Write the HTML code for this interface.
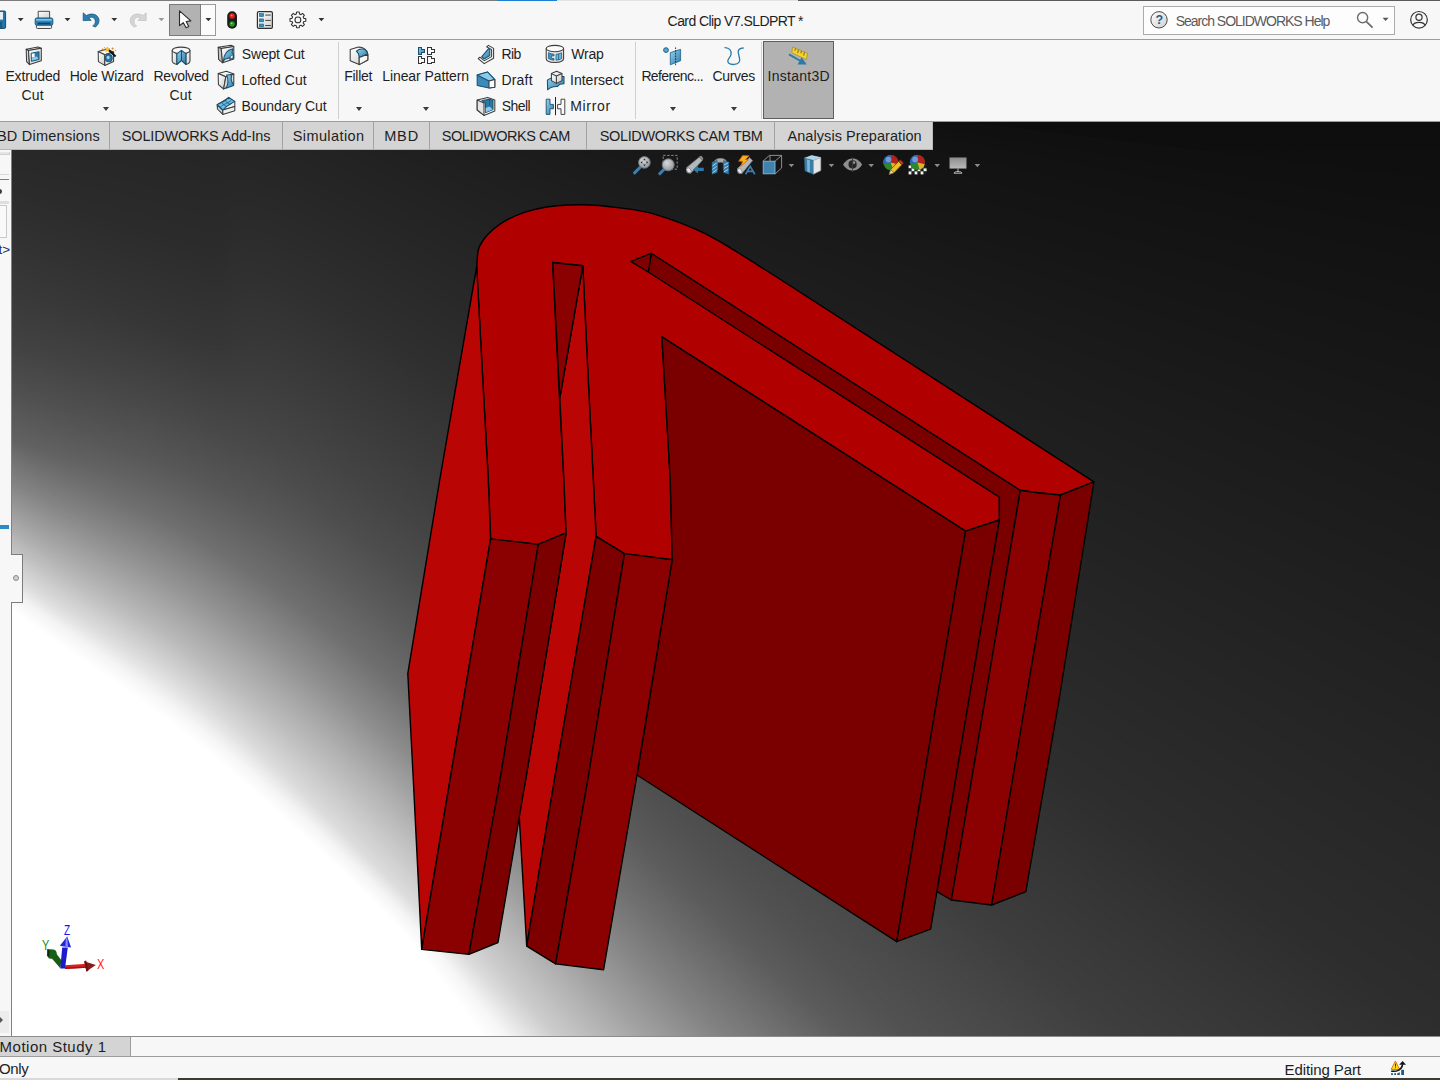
<!DOCTYPE html>
<html lang="en">
<head>
<meta charset="utf-8">
<title>Card Clip V7.SLDPRT * - SOLIDWORKS</title>
<style>

html,body{margin:0;padding:0;background:#f7f7f7;}
body{width:1440px;height:1080px;overflow:hidden;font-family:"Liberation Sans",sans-serif;}
#app{position:relative;width:1440px;height:1080px;overflow:hidden;background:#f7f7f7;}
.abs{position:absolute;}
.t{position:absolute;white-space:nowrap;font-family:"Liberation Sans",sans-serif;}
.ln{position:absolute;}
svg{position:absolute;overflow:visible;}

</style>
</head>
<body>
<div id="app">
<div id="viewport" class="abs" style="left:12px;top:122px;width:1428px;height:914px;background:linear-gradient(42.2deg,#fff 0%,#ffffff 19.65%,#cdcdcd 22.58%,#a2a2a2 26.25%,#828282 29.43%,#5c5c5c 34.44%,#464646 38.90%,#3c3c3c 46.29%,#383838 49.59%,#2c2c2c 58.75%,#101010 98.53%);"></div>
<svg id="scene-bg" style="left:12px;top:122px;overflow:hidden" width="1428" height="914" viewBox="12 122 1428 914">
<rect x="12" y="122" width="1428" height="914" fill="#0e0e0e"/>
<path fill="#0f0f0f" d="M-1180,140L1320,150C1340,150 1420,150 1440,150L3940,161L1440,2661L-3680,2640Z"/>
<path fill="#101010" d="M-1282,-150L1200,150C1240,155 1400,174 1440,179L3922,479L1422,2979L-3782,2350Z"/>
<path fill="#111111" d="M-1389,-244L1080,150C1140,160 1380,198 1440,208L3909,602L1409,3102L-3889,2256Z"/>
<path fill="#121212" d="M-1444,-338L1008,150C1080,164 1368,222 1440,236L3892,724L1392,3224L-3944,2162Z"/>
<path fill="#131313" d="M-1502,-404L936,150C1020,169 1356,245 1440,264L3878,818L1378,3318L-4002,2096Z"/>
<path fill="#141414" d="M-1562,-452L864,150C960,174 1344,269 1440,293L3866,895L1366,3395L-4062,2048Z"/>
<path fill="#151515" d="M-1625,-490L792,150C900,179 1332,293 1440,322L3857,961L1357,3461L-4125,2010Z"/>
<path fill="#161616" d="M-1689,-519L720,150C840,183 1320,317 1440,350L3849,1019L1349,3519L-4189,1981Z"/>
<path fill="#171717" d="M-1701,-579L690,150C815,188 1315,341 1440,379L3831,1108L1331,3608L-4201,1921Z"/>
<path fill="#181818" d="M-1714,-634L660,150C790,193 1310,365 1440,408L3814,1191L1314,3691L-4214,1866Z"/>
<path fill="#191919" d="M-1727,-683L630,150C765,198 1305,389 1440,436L3797,1269L1297,3769L-4227,1817Z"/>
<path fill="#1a1a1a" d="M-1741,-728L600,150C740,202 1300,412 1440,465L3781,1343L1281,3843L-4241,1772Z"/>
<path fill="#1b1b1b" d="M-1755,-769L570,150C715,207 1295,436 1440,494L3765,1412L1265,3912L-4255,1731Z"/>
<path fill="#1c1c1c" d="M-1770,-806L540,150C690,212 1290,460 1440,522L3750,1479L1250,3979L-4270,1694Z"/>
<path fill="#1d1d1d" d="M-1785,-840L510,150C665,217 1285,484 1440,551L3735,1542L1235,4042L-4285,1660Z"/>
<path fill="#1e1e1e" d="M-1802,-872L480,150C640,222 1280,508 1440,580L3722,1602L1222,4102L-4302,1628Z"/>
<path fill="#1f1f1f" d="M-1819,-899L450,150C615,226 1275,531 1440,608L3709,1656L1209,4156L-4319,1601Z"/>
<path fill="#202020" d="M-1838,-924L420,150C590,231 1270,554 1440,635L3698,1709L1198,4209L-4338,1576Z"/>
<path fill="#212121" d="M-1857,-947L390,150C565,235 1265,577 1440,662L3687,1759L1187,4259L-4357,1553Z"/>
<path fill="#222222" d="M-2000,-699L352,150C358,152 209,74 390,164C571,254 1265,602 1440,690L3675,1810L1175,4310L-4500,1801Z"/>
<path fill="#232323" d="M-2038,-699L314,150C327,155 202,83 390,177C578,272 1265,627 1440,718L3663,1861L1163,4361L-4538,1801Z"/>
<path fill="#242424" d="M-2076,-699L276,150C295,157 196,92 390,191C584,290 1265,653 1440,745L3651,1911L1151,4411L-4576,1801Z"/>
<path fill="#252525" d="M-2114,-699L238,150C263,159 190,101 390,205C590,309 1265,678 1440,772L3639,1961L1139,4461L-4614,1801Z"/>
<path fill="#262626" d="M-2152,-699L200,150C232,161 183,110 390,219C597,327 1265,703 1440,800L3627,2011L1127,4511L-4652,1801Z"/>
<path fill="#272727" d="M-2327,-352L122,150C135,153 155,152 200,166C245,180 183,122 390,232C597,343 1265,729 1440,829L3614,2064L1114,4564L-4827,2148Z"/>
<path fill="#282828" d="M-2405,-352L44,150C70,155 142,166 200,182C258,198 183,133 390,246C597,359 1265,756 1440,858L3600,2116L1100,4616L-4905,2148Z"/>
<path fill="#292929" d="M-2394,-392L44,162C70,168 142,182 200,198C258,214 183,143 390,258C597,373 1265,782 1440,886L3585,2170L1085,4670L-4894,2108Z"/>
<path fill="#2a2a2a" d="M-2381,-431L44,175C70,182 142,198 200,214C258,230 183,153 390,270C597,387 1265,808 1440,915L3570,2224L1070,4724L-4881,2069Z"/>
<path fill="#2b2b2b" d="M-2368,-470L44,188C70,195 142,214 200,230C258,246 183,163 390,282C597,401 1265,833 1440,944L3555,2277L1055,4777L-4868,2030Z"/>
<path fill="#2c2c2c" d="M-2354,-507L44,200C70,208 142,230 200,246C258,262 183,173 390,294C597,415 1265,859 1440,972L3540,2329L1040,4829L-4854,1993Z"/>
<path fill="#2d2d2d" d="M-2351,-508L44,208C70,216 142,239 200,255C258,271 183,182 390,306C597,430 1265,885 1440,1001L3524,2381L1024,4881L-4851,1992Z"/>
<path fill="#2e2e2e" d="M-2348,-509L44,217C70,225 142,247 200,264C258,281 183,190 390,318C597,446 1265,911 1440,1030L3509,2433L1009,4933L-4848,1991Z"/>
<path fill="#2f2f2f" d="M-2345,-510L44,225C70,233 142,256 200,273C258,290 187,204 390,330C593,456 1248,913 1420,1030L3488,2435L988,4935L-4845,1990Z"/>
<path fill="#303030" d="M-2343,-511L44,233C70,241 142,264 200,282C258,300 190,217 390,342C590,467 1232,915 1400,1030L3467,2437L967,4937L-4843,1989Z"/>
<path fill="#313131" d="M-2340,-512L44,242C70,250 142,273 200,291C258,309 193,227 390,350C587,473 1215,917 1380,1030L3441,2445L941,4945L-4840,1988Z"/>
<path fill="#323232" d="M-2337,-513L44,250C70,258 142,282 200,300C258,318 197,237 390,358C583,480 1199,918 1360,1030L3416,2453L916,4953L-4837,1987Z"/>
<path fill="#333333" d="M-2331,-523L44,257C70,266 142,290 200,308C258,327 200,246 390,366C580,487 1182,919 1341,1030L3391,2461L891,4961L-4831,1977Z"/>
<path fill="#343434" d="M-2325,-533L44,264C70,273 142,298 200,317C258,335 203,256 390,375C577,494 1166,921 1321,1030L3365,2469L865,4969L-4825,1967Z"/>
<path fill="#353535" d="M-2320,-543L44,271C70,280 142,307 200,325C258,344 207,265 390,383C573,500 1149,922 1301,1030L3339,2478L839,4978L-4820,1957Z"/>
<path fill="#363636" d="M-2314,-553L44,279C70,288 142,315 200,334C258,352 210,275 390,391C570,507 1132,924 1281,1030L3313,2487L813,4987L-4814,1947Z"/>
<path fill="#373737" d="M-2308,-563L44,286C70,295 142,323 200,342C258,361 213,284 390,399C567,514 1116,925 1261,1030L3286,2496L786,4996L-4808,1937Z"/>
<path fill="#383838" d="M-2320,-521L44,293C70,302 142,328 200,347C258,366 216,293 390,407C564,521 1099,926 1241,1030L3259,2506L759,5006L-4820,1979Z"/>
<path fill="#393939" d="M-2331,-479L44,300C70,309 142,332 200,351C258,370 220,302 390,416C560,529 1083,928 1221,1030L3232,2516L732,5016L-4831,2021Z"/>
<path fill="#3a3a3a" d="M-2336,-460L44,306C70,314 142,336 200,356C258,375 223,311 390,424C557,536 1066,929 1202,1030L3204,2526L704,5026L-4836,2040Z"/>
<path fill="#3b3b3b" d="M-2340,-441L44,311C70,319 142,340 200,360C258,380 226,320 390,432C554,543 1050,930 1182,1030L3176,2537L676,5037L-4840,2059Z"/>
<path fill="#3c3c3c" d="M-2344,-422L44,317C70,325 142,344 200,365C258,385 230,329 390,440C550,551 1033,932 1162,1030L3148,2548L648,5048L-4844,2078Z"/>
<path fill="#3d3d3d" d="M-2348,-403L44,322C70,330 142,349 200,370C258,390 233,337 390,448C547,558 1017,933 1142,1030L3118,2561L618,5061L-4848,2097Z"/>
<path fill="#3e3e3e" d="M-2353,-384L44,328C70,336 142,353 200,374C258,395 236,346 390,455C544,564 1000,934 1122,1030L3088,2574L588,5074L-4853,2116Z"/>
<path fill="#3f3f3f" d="M-2357,-365L44,333C70,341 142,357 200,379C258,400 238,354 390,462C542,571 991,935 1111,1030L3076,2576L576,5076L-4857,2135Z"/>
<path fill="#404040" d="M-2360,-346L44,339C70,346 142,361 200,383C258,405 240,362 390,470C540,578 982,937 1100,1030L3064,2578L564,5078L-4860,2154Z"/>
<path fill="#414141" d="M-2364,-326L44,344C70,352 142,366 200,388C258,410 242,370 390,478C538,585 973,938 1089,1030L3051,2580L551,5080L-4864,2174Z"/>
<path fill="#424242" d="M-2368,-307L44,350C70,357 142,370 200,392C258,415 244,379 390,485C536,591 964,939 1079,1030L3039,2582L539,5082L-4868,2193Z"/>
<path fill="#434343" d="M-2364,-318L44,354C70,361 142,374 200,397C258,420 245,387 390,492C535,598 955,940 1068,1030L3027,2583L527,5083L-4864,2182Z"/>
<path fill="#444444" d="M-2360,-329L44,357C70,365 142,378 200,402C258,425 247,395 390,500C533,605 946,942 1057,1030L3014,2585L514,5085L-4860,2171Z"/>
<path fill="#454545" d="M-2356,-340L44,361C70,368 142,382 200,406C258,430 249,402 390,506C531,610 937,943 1046,1030L2999,2590L499,5090L-4856,2160Z"/>
<path fill="#464646" d="M-2352,-350L44,364C70,372 142,386 200,411C258,435 251,409 390,512C529,615 928,944 1035,1030L2985,2595L485,5095L-4852,2150Z"/>
<path fill="#474747" d="M-2347,-361L44,368C70,376 142,390 200,415C258,440 253,416 390,518C527,620 919,945 1024,1030L2970,2600L470,5100L-4847,2139Z"/>
<path fill="#484848" d="M-2343,-372L44,371C70,380 142,395 200,420C258,445 254,422 390,524C526,626 910,946 1014,1030L2955,2605L455,5105L-4843,2128Z"/>
<path fill="#494949" d="M-2342,-371L44,375C70,383 142,398 200,424C258,450 256,429 390,530C524,631 901,947 1003,1030L2939,2611L439,5111L-4842,2129Z"/>
<path fill="#4a4a4a" d="M-2341,-370L44,379C70,387 142,401 200,428C258,454 258,436 390,536C522,636 892,948 992,1030L2924,2616L424,5116L-4841,2130Z"/>
<path fill="#4b4b4b" d="M-2341,-369L44,382C70,390 142,405 200,431C258,458 260,442 390,542C520,642 882,949 981,1030L2909,2622L409,5122L-4841,2131Z"/>
<path fill="#4c4c4c" d="M-2340,-367L44,386C70,394 142,408 200,435C258,462 262,449 390,548C518,647 873,950 970,1030L2893,2628L393,5128L-4840,2133Z"/>
<path fill="#4d4d4d" d="M-2339,-366L44,389C70,398 142,411 200,439C258,466 263,455 390,554C517,653 864,951 959,1030L2877,2634L377,5134L-4839,2134Z"/>
<path fill="#4e4e4e" d="M-2338,-365L44,393C70,401 142,415 200,442C258,470 265,462 390,560C515,658 855,952 948,1030L2861,2640L361,5140L-4838,2135Z"/>
<path fill="#4f4f4f" d="M-2337,-364L44,396C70,405 142,418 200,446C258,474 267,467 390,564C513,661 846,952 938,1030L2841,2650L341,5150L-4837,2136Z"/>
<path fill="#505050" d="M-2337,-363L44,400C70,408 142,422 200,450C258,478 269,471 390,568C511,665 837,953 927,1030L2821,2661L321,5161L-4837,2137Z"/>
<path fill="#515151" d="M-2332,-374L44,403C70,411 142,426 200,454C258,482 271,476 390,572C509,668 828,954 916,1030L2801,2672L301,5172L-4832,2126Z"/>
<path fill="#525252" d="M-2328,-384L44,406C70,414 142,429 200,458C258,486 272,481 390,576C508,671 819,954 905,1030L2780,2683L280,5183L-4828,2116Z"/>
<path fill="#535353" d="M-2324,-395L44,408C70,417 142,433 200,461C258,490 274,485 390,580C506,675 814,955 898,1030L2771,2687L271,5187L-4824,2105Z"/>
<path fill="#545454" d="M-2319,-405L44,411C70,420 142,436 200,465C258,494 275,490 390,584C505,678 808,956 892,1030L2761,2690L261,5190L-4819,2095Z"/>
<path fill="#555555" d="M-2314,-416L44,414C70,423 142,440 200,469C258,498 276,494 390,588C504,682 803,956 886,1030L2751,2694L251,5194L-4814,2084Z"/>
<path fill="#565656" d="M-2310,-426L44,417C70,426 142,443 200,472C258,502 277,499 390,592C503,685 798,957 879,1030L2741,2698L241,5198L-4810,2074Z"/>
<path fill="#575757" d="M-2305,-436L44,419C70,429 142,447 200,476C258,506 278,504 390,596C502,688 792,958 872,1030L2731,2702L231,5202L-4805,2064Z"/>
<path fill="#585858" d="M-2300,-446L44,422C70,432 142,450 200,480C258,510 279,508 390,600C501,692 787,958 866,1030L2721,2706L221,5206L-4800,2054Z"/>
<path fill="#595959" d="M-2302,-440L44,425C70,435 142,453 200,482C258,512 280,513 390,604C500,695 781,959 860,1030L2711,2710L211,5210L-4802,2060Z"/>
<path fill="#5a5a5a" d="M-2303,-433L44,428C70,437 142,455 200,485C258,515 281,517 390,608C499,699 776,960 853,1030L2701,2714L201,5214L-4803,2067Z"/>
<path fill="#5b5b5b" d="M-2304,-427L44,431C70,440 142,457 200,488C258,518 282,522 390,612C498,702 770,960 846,1030L2690,2718L190,5218L-4804,2073Z"/>
<path fill="#5c5c5c" d="M-2306,-420L44,433C70,443 142,460 200,490C258,520 283,526 390,616C497,706 765,961 840,1030L2680,2723L180,5223L-4806,2080Z"/>
<path fill="#5d5d5d" d="M-2307,-414L44,436C70,446 142,462 200,492C258,523 284,530 390,620C496,710 762,962 837,1030L2679,2720L179,5220L-4807,2086Z"/>
<path fill="#5e5e5e" d="M-2308,-407L44,439C70,448 142,464 200,495C258,526 284,534 390,623C496,712 760,962 834,1030L2676,2720L176,5220L-4808,2093Z"/>
<path fill="#5f5f5f" d="M-2310,-401L44,442C70,451 142,467 200,498C258,528 285,538 390,626C495,715 757,963 830,1030L2673,2719L173,5219L-4810,2099Z"/>
<path fill="#606060" d="M-2311,-394L44,444C70,454 142,469 200,500C258,531 285,541 390,629C495,718 754,963 827,1030L2670,2719L170,5219L-4811,2106Z"/>
<path fill="#616161" d="M-2312,-388L44,447C70,456 142,472 200,502C258,533 286,545 390,633C494,721 752,964 824,1030L2668,2718L168,5218L-4812,2112Z"/>
<path fill="#626262" d="M-2314,-381L44,450C70,459 142,474 200,505C258,536 287,548 390,636C493,723 749,964 821,1030L2665,2718L165,5218L-4814,2119Z"/>
<path fill="#636363" d="M-2309,-394L44,451C70,461 142,476 200,508C258,539 287,552 390,639C493,726 746,965 818,1030L2662,2717L162,5217L-4809,2106Z"/>
<path fill="#646464" d="M-2303,-407L44,453C70,462 142,478 200,510C258,542 288,555 390,642C492,729 744,965 814,1030L2659,2717L159,5217L-4803,2093Z"/>
<path fill="#656565" d="M-2298,-420L44,454C70,464 142,481 200,512C258,544 288,559 390,645C492,732 741,966 811,1030L2657,2716L157,5216L-4798,2080Z"/>
<path fill="#666666" d="M-2293,-432L44,456C70,466 142,483 200,515C258,547 289,563 390,648C491,734 738,966 808,1030L2654,2716L154,5216L-4793,2068Z"/>
<path fill="#676767" d="M-2288,-445L44,457C70,467 142,485 200,518C258,550 289,566 390,652C491,737 736,967 805,1030L2651,2715L151,5215L-4788,2055Z"/>
<path fill="#686868" d="M-2282,-457L44,459C70,469 142,487 200,520C258,553 290,570 390,655C490,740 733,967 801,1030L2649,2715L149,5215L-4782,2043Z"/>
<path fill="#696969" d="M-2277,-470L44,460C70,470 142,490 200,522C258,555 290,573 390,658C490,742 730,968 798,1030L2646,2714L146,5214L-4777,2030Z"/>
<path fill="#6a6a6a" d="M-2271,-482L44,461C70,472 142,492 200,525C258,558 291,577 390,661C489,745 728,969 795,1030L2643,2713L143,5213L-4771,2018Z"/>
<path fill="#6b6b6b" d="M-2266,-494L44,463C70,474 142,494 200,528C258,561 291,580 390,664C489,748 725,969 792,1030L2641,2713L141,5213L-4766,2006Z"/>
<path fill="#6c6c6c" d="M-2260,-506L44,464C70,475 142,496 200,530C258,564 292,584 390,667C488,751 722,970 789,1030L2638,2712L138,5212L-4760,1994Z"/>
<path fill="#6d6d6d" d="M-2254,-518L44,466C70,477 142,498 200,532C258,567 292,588 390,671C488,753 720,970 785,1030L2635,2712L135,5212L-4754,1982Z"/>
<path fill="#6e6e6e" d="M-2249,-530L44,467C70,478 142,501 200,535C258,569 293,591 390,674C487,756 717,971 782,1030L2633,2711L133,5211L-4749,1970Z"/>
<path fill="#6f6f6f" d="M-2243,-542L44,469C70,480 142,503 200,538C258,572 294,595 390,677C486,759 714,971 779,1030L2630,2710L130,5210L-4743,1958Z"/>
<path fill="#707070" d="M-2237,-553L44,470C70,482 142,505 200,540C258,575 294,598 390,680C486,762 711,972 776,1030L2627,2710L127,5210L-4737,1947Z"/>
<path fill="#717171" d="M-2236,-555L44,471C70,483 142,507 200,542C258,577 295,601 390,682C485,763 709,972 773,1030L2622,2712L122,5212L-4736,1945Z"/>
<path fill="#727272" d="M-2234,-556L44,473C70,485 142,508 200,543C258,579 295,603 390,684C485,765 706,972 769,1030L2617,2715L117,5215L-4734,1944Z"/>
<path fill="#737373" d="M-2233,-558L44,474C70,486 142,510 200,545C258,580 296,605 390,686C484,767 703,973 766,1030L2611,2717L111,5217L-4733,1942Z"/>
<path fill="#747474" d="M-2232,-559L44,476C70,488 142,511 200,547C258,582 296,607 390,688C484,769 701,973 763,1030L2606,2720L106,5220L-4732,1941Z"/>
<path fill="#757575" d="M-2230,-561L44,477C70,489 142,513 200,548C258,584 297,610 390,690C483,770 698,973 760,1030L2600,2722L100,5222L-4730,1939Z"/>
<path fill="#767676" d="M-2229,-562L44,479C70,490 142,514 200,550C258,586 297,612 390,692C483,772 695,974 757,1030L2594,2725L94,5225L-4729,1938Z"/>
<path fill="#777777" d="M-2228,-564L44,480C70,492 142,516 200,552C258,587 298,614 390,694C482,774 693,974 753,1030L2589,2727L89,5227L-4728,1936Z"/>
<path fill="#787878" d="M-2226,-565L44,481C70,493 142,518 200,553C258,589 298,617 390,696C482,775 690,974 750,1030L2583,2730L83,5230L-4726,1935Z"/>
<path fill="#797979" d="M-2225,-567L44,483C70,495 142,519 200,555C258,591 299,619 390,698C481,777 687,975 747,1030L2577,2733L77,5233L-4725,1933Z"/>
<path fill="#7a7a7a" d="M-2224,-568L44,484C70,496 142,521 200,557C258,593 299,621 390,700C481,779 685,975 744,1030L2572,2736L72,5236L-4724,1932Z"/>
<path fill="#7b7b7b" d="M-2222,-569L44,486C70,498 142,522 200,558C258,594 300,623 390,702C480,781 682,975 740,1030L2566,2738L66,5238L-4722,1931Z"/>
<path fill="#7c7c7c" d="M-2221,-571L44,487C70,499 142,524 200,560C258,596 300,626 390,704C480,782 679,976 737,1030L2560,2741L60,5241L-4721,1929Z"/>
<path fill="#7d7d7d" d="M-2220,-572L44,489C70,501 142,525 200,562C258,598 301,628 390,706C479,784 677,976 734,1030L2554,2744L54,5244L-4720,1928Z"/>
<path fill="#7e7e7e" d="M-2218,-574L44,490C70,502 142,527 200,563C258,600 302,630 390,708C478,786 674,976 731,1030L2548,2747L48,5247L-4718,1926Z"/>
<path fill="#7f7f7f" d="M-2217,-575L44,491C70,504 142,529 200,565C258,601 302,632 390,710C478,788 671,977 728,1030L2542,2750L42,5250L-4717,1925Z"/>
<path fill="#808080" d="M-2216,-576L44,493C70,505 142,530 200,567C258,603 303,635 390,712C477,789 669,977 724,1030L2536,2753L36,5253L-4716,1924Z"/>
<path fill="#818181" d="M-2214,-578L44,494C70,507 142,532 200,568C258,605 303,637 390,714C477,791 666,977 721,1030L2530,2756L30,5256L-4714,1922Z"/>
<path fill="#828282" d="M-2213,-579L44,496C70,508 142,533 200,570C258,607 304,639 390,716C476,793 663,978 718,1030L2524,2759L24,5259L-4713,1921Z"/>
<path fill="#838383" d="M-2212,-580L44,497C70,510 142,535 200,572C258,608 304,642 390,718C476,794 661,978 716,1030L2521,2760L21,5260L-4712,1920Z"/>
<path fill="#848484" d="M-2210,-582L44,499C70,511 142,536 200,573C258,610 304,644 390,720C476,796 659,978 713,1030L2517,2761L17,5261L-4710,1918Z"/>
<path fill="#858585" d="M-2209,-583L44,500C70,512 142,538 200,575C258,612 305,646 390,722C475,798 657,979 711,1030L2514,2762L14,5262L-4709,1917Z"/>
<path fill="#868686" d="M-2206,-588L44,501C70,514 142,540 200,577C258,614 305,648 390,724C475,800 655,979 708,1030L2510,2763L10,5263L-4706,1912Z"/>
<path fill="#878787" d="M-2203,-593L44,502C70,515 142,541 200,578C258,616 306,651 390,726C474,801 653,979 706,1030L2507,2764L7,5264L-4703,1907Z"/>
<path fill="#888888" d="M-2201,-597L44,503C70,516 142,543 200,580C258,617 306,653 390,728C474,803 651,980 703,1030L2504,2765L4,5265L-4701,1903Z"/>
<path fill="#898989" d="M-2198,-602L44,505C70,517 142,544 200,582C258,619 307,655 390,730C473,805 649,980 701,1030L2500,2766L0,5266L-4698,1898Z"/>
<path fill="#8a8a8a" d="M-2195,-607L44,506C70,519 142,546 200,583C258,621 307,658 390,732C473,806 647,980 698,1030L2497,2767L-3,5267L-4695,1893Z"/>
<path fill="#8b8b8b" d="M-2192,-611L44,507C70,520 142,547 200,585C258,623 307,660 390,734C473,808 645,981 696,1030L2493,2768L-7,5268L-4692,1889Z"/>
<path fill="#8c8c8c" d="M-2189,-616L44,508C70,521 142,549 200,587C258,625 308,662 390,736C472,810 643,981 694,1030L2490,2769L-10,5269L-4689,1884Z"/>
<path fill="#8d8d8d" d="M-2186,-621L44,509C70,522 142,550 200,588C258,626 308,664 390,738C472,812 641,981 691,1030L2486,2770L-14,5270L-4686,1879Z"/>
<path fill="#8e8e8e" d="M-2183,-625L44,510C70,524 142,552 200,590C258,628 309,667 390,740C471,813 639,982 689,1030L2483,2771L-17,5271L-4683,1875Z"/>
<path fill="#8f8f8f" d="M-2180,-630L44,512C70,525 142,553 200,592C258,630 309,669 390,742C471,815 637,982 686,1030L2478,2773L-22,5273L-4680,1870Z"/>
<path fill="#909090" d="M-2177,-634L44,513C70,526 142,555 200,593C258,632 309,671 390,743C471,816 635,982 684,1030L2473,2776L-27,5276L-4677,1866Z"/>
<path fill="#919191" d="M-2174,-639L44,514C70,527 142,556 200,595C258,634 310,672 390,745C470,818 633,982 681,1030L2469,2778L-31,5278L-4674,1861Z"/>
<path fill="#929292" d="M-2172,-643L44,515C70,529 142,558 200,597C258,635 310,674 390,747C470,819 631,983 679,1030L2464,2780L-36,5280L-4672,1857Z"/>
<path fill="#939393" d="M-2169,-648L44,516C70,530 142,560 200,598C258,637 311,676 390,748C469,820 629,983 677,1030L2459,2782L-41,5282L-4669,1852Z"/>
<path fill="#949494" d="M-2166,-652L44,517C70,531 142,561 200,600C258,639 311,678 390,750C469,822 627,983 674,1030L2455,2785L-45,5285L-4666,1848Z"/>
<path fill="#959595" d="M-2164,-655L44,519C70,532 142,563 200,602C258,640 311,680 390,752C469,823 625,984 672,1030L2450,2787L-50,5287L-4664,1845Z"/>
<path fill="#969696" d="M-2162,-657L44,520C70,534 142,564 200,603C258,642 312,682 390,753C468,824 623,984 669,1030L2445,2790L-55,5290L-4662,1843Z"/>
<path fill="#979797" d="M-2160,-660L44,521C70,535 142,565 200,604C258,644 312,684 390,755C468,826 621,984 667,1030L2440,2792L-60,5292L-4660,1840Z"/>
<path fill="#989898" d="M-2158,-662L44,522C70,536 142,567 200,606C258,645 313,686 390,757C467,827 619,984 664,1030L2436,2794L-64,5294L-4658,1838Z"/>
<path fill="#999999" d="M-2156,-665L44,523C70,537 142,568 200,608C258,647 313,688 390,758C467,829 617,985 662,1030L2431,2797L-69,5297L-4656,1835Z"/>
<path fill="#9a9a9a" d="M-2154,-667L44,524C70,539 142,570 200,609C258,648 313,690 390,760C467,830 615,985 660,1030L2426,2799L-74,5299L-4654,1833Z"/>
<path fill="#9b9b9b" d="M-2152,-670L44,526C70,540 142,571 200,610C258,650 314,692 390,762C466,832 613,985 657,1030L2421,2802L-79,5302L-4652,1830Z"/>
<path fill="#9c9c9c" d="M-2150,-672L44,527C70,541 142,573 200,612C258,651 314,694 390,763C466,833 611,986 655,1030L2416,2805L-84,5305L-4650,1828Z"/>
<path fill="#9d9d9d" d="M-2148,-675L44,528C70,542 142,574 200,614C258,653 315,696 390,765C465,834 608,986 652,1030L2410,2807L-90,5307L-4648,1825Z"/>
<path fill="#9e9e9e" d="M-2146,-677L44,529C70,543 142,575 200,615C258,655 315,698 390,767C465,836 606,986 650,1030L2405,2810L-95,5310L-4646,1823Z"/>
<path fill="#9f9f9f" d="M-2144,-680L44,530C70,545 142,577 200,616C258,656 315,699 390,768C465,837 604,986 647,1030L2400,2813L-100,5313L-4644,1820Z"/>
<path fill="#a0a0a0" d="M-2142,-682L44,531C70,546 142,578 200,618C258,658 316,701 390,770C464,839 602,987 645,1030L2395,2815L-105,5315L-4642,1818Z"/>
<path fill="#a1a1a1" d="M-2140,-684L44,533C70,547 142,580 200,620C258,659 316,703 390,772C464,840 600,987 642,1030L2390,2818L-110,5318L-4640,1816Z"/>
<path fill="#a2a2a2" d="M-2138,-687L44,534C70,548 142,581 200,621C258,661 317,705 390,773C463,842 598,987 640,1030L2384,2821L-116,5321L-4638,1813Z"/>
<path fill="#a3a3a3" d="M-2136,-689L44,535C70,549 142,582 200,622C258,663 317,707 390,775C463,843 597,988 638,1030L2381,2822L-119,5322L-4636,1811Z"/>
<path fill="#a4a4a4" d="M-2134,-692L44,536C70,551 142,584 200,624C258,664 317,709 390,777C463,844 595,988 636,1030L2377,2824L-123,5324L-4634,1808Z"/>
<path fill="#a5a5a5" d="M-2132,-694L44,537C70,552 142,585 200,626C258,666 318,711 390,778C462,846 593,988 634,1030L2373,2826L-127,5326L-4632,1806Z"/>
<path fill="#a6a6a6" d="M-2130,-697L44,538C70,553 142,587 200,627C258,667 318,713 390,780C462,847 591,988 632,1030L2369,2827L-131,5327L-4630,1803Z"/>
<path fill="#a7a7a7" d="M-2128,-699L44,540C70,554 142,588 200,628C258,669 318,715 390,782C462,849 590,989 630,1030L2366,2829L-134,5329L-4628,1801Z"/>
<path fill="#a8a8a8" d="M-2126,-701L44,541C70,556 142,590 200,630C258,670 319,717 390,783C461,850 588,989 628,1030L2362,2831L-138,5331L-4626,1799Z"/>
<path fill="#a9a9a9" d="M-2124,-704L44,542C70,557 142,591 200,632C258,672 319,719 390,785C461,851 586,989 626,1030L2358,2832L-142,5332L-4624,1796Z"/>
<path fill="#aaaaaa" d="M-2122,-706L44,543C70,558 142,592 200,633C258,674 319,720 390,787C461,853 585,989 623,1030L2354,2834L-146,5334L-4622,1794Z"/>
<path fill="#ababab" d="M-2120,-708L44,544C70,559 142,594 200,634C258,675 320,722 390,788C460,854 583,990 621,1030L2350,2836L-150,5336L-4620,1792Z"/>
<path fill="#acacac" d="M-2118,-711L44,545C70,560 142,595 200,636C258,677 320,724 390,790C460,856 581,990 619,1030L2346,2838L-154,5338L-4618,1789Z"/>
<path fill="#adadad" d="M-2116,-713L44,547C70,562 142,597 200,638C258,678 320,726 390,792C460,857 579,990 617,1030L2342,2839L-158,5339L-4616,1787Z"/>
<path fill="#aeaeae" d="M-2113,-715L44,548C70,563 142,598 200,639C258,680 321,728 390,793C459,858 578,991 615,1030L2338,2841L-162,5341L-4613,1785Z"/>
<path fill="#afafaf" d="M-2111,-718L44,549C70,564 142,599 200,640C258,682 321,730 390,795C459,860 576,991 613,1030L2334,2843L-166,5343L-4611,1782Z"/>
<path fill="#b0b0b0" d="M-2109,-720L44,550C70,565 142,601 200,642C258,683 321,732 390,797C459,861 574,991 611,1030L2330,2845L-170,5345L-4609,1780Z"/>
<path fill="#b1b1b1" d="M-2107,-724L44,551C70,566 142,602 200,644C258,685 322,734 390,798C458,863 572,991 609,1030L2326,2847L-174,5347L-4607,1776Z"/>
<path fill="#b2b2b2" d="M-2104,-727L44,552C70,568 142,604 200,645C258,686 322,736 390,800C458,864 571,992 607,1030L2322,2849L-178,5349L-4604,1773Z"/>
<path fill="#b3b3b3" d="M-2101,-731L44,553C70,569 142,605 200,646C258,688 323,738 390,802C457,866 569,992 605,1030L2318,2850L-182,5350L-4601,1769Z"/>
<path fill="#b4b4b4" d="M-2098,-734L44,554C70,570 142,606 200,648C258,690 323,740 390,804C457,867 567,992 603,1030L2315,2852L-185,5352L-4598,1766Z"/>
<path fill="#b5b5b5" d="M-2096,-738L44,555C70,571 142,608 200,650C258,691 323,742 390,805C457,869 566,993 601,1030L2311,2853L-189,5353L-4596,1762Z"/>
<path fill="#b6b6b6" d="M-2093,-742L44,556C70,572 142,609 200,651C258,693 324,744 390,807C456,870 564,993 599,1030L2308,2855L-192,5355L-4593,1758Z"/>
<path fill="#b7b7b7" d="M-2090,-745L44,557C70,573 142,611 200,652C258,694 324,746 390,809C456,872 562,993 597,1030L2304,2856L-196,5356L-4590,1755Z"/>
<path fill="#b8b8b8" d="M-2087,-749L44,558C70,574 142,612 200,654C258,696 324,748 390,811C456,874 560,993 594,1030L2300,2858L-200,5358L-4587,1751Z"/>
<path fill="#b9b9b9" d="M-2084,-752L44,559C70,575 142,613 200,656C258,698 325,750 390,813C455,875 559,994 592,1030L2296,2859L-204,5359L-4584,1748Z"/>
<path fill="#bababa" d="M-2082,-756L44,560C70,577 142,615 200,657C258,699 325,752 390,815C455,877 557,994 590,1030L2293,2861L-207,5361L-4582,1744Z"/>
<path fill="#bbbbbb" d="M-2079,-759L44,561C70,578 142,616 200,658C258,701 325,754 390,816C455,878 555,994 588,1030L2289,2863L-211,5363L-4579,1741Z"/>
<path fill="#bcbcbc" d="M-2076,-762L44,562C70,579 142,617 200,660C258,703 326,757 390,818C454,880 553,995 586,1030L2285,2864L-215,5364L-4576,1738Z"/>
<path fill="#bdbdbd" d="M-2075,-763L44,564C70,580 142,619 200,661C258,704 326,759 390,820C454,881 552,995 584,1030L2281,2866L-219,5366L-4575,1737Z"/>
<path fill="#bebebe" d="M-2073,-764L44,565C70,581 142,620 200,662C258,705 326,761 390,822C454,883 550,995 582,1030L2277,2868L-223,5368L-4573,1736Z"/>
<path fill="#bfbfbf" d="M-2072,-765L44,566C70,582 142,621 200,664C258,707 327,763 390,824C453,885 548,996 580,1030L2273,2869L-227,5369L-4572,1735Z"/>
<path fill="#c0c0c0" d="M-2071,-766L44,567C70,583 142,622 200,665C258,708 327,765 390,825C453,886 547,996 578,1030L2269,2871L-231,5371L-4571,1734Z"/>
<path fill="#c1c1c1" d="M-2070,-767L44,568C70,584 142,623 200,666C258,710 327,767 390,827C453,888 545,996 576,1030L2265,2873L-235,5373L-4570,1733Z"/>
<path fill="#c2c2c2" d="M-2068,-768L44,569C70,585 142,624 200,668C258,711 328,769 390,829C452,890 543,997 574,1030L2261,2875L-239,5375L-4568,1732Z"/>
<path fill="#c3c3c3" d="M-2067,-769L44,570C70,586 142,625 200,669C258,712 328,771 390,831C452,891 541,997 572,1030L2257,2877L-243,5377L-4567,1731Z"/>
<path fill="#c4c4c4" d="M-2066,-770L44,571C70,587 142,626 200,670C258,714 328,773 390,833C452,893 540,997 570,1030L2253,2879L-247,5379L-4566,1730Z"/>
<path fill="#c5c5c5" d="M-2065,-771L44,572C70,588 142,627 200,671C258,715 329,775 390,835C451,894 538,997 568,1030L2249,2880L-251,5380L-4565,1729Z"/>
<path fill="#c6c6c6" d="M-2063,-772L44,573C70,590 142,629 200,672C258,716 329,777 390,836C451,896 536,998 565,1030L2244,2882L-256,5382L-4563,1728Z"/>
<path fill="#c7c7c7" d="M-2062,-773L44,574C70,591 142,630 200,674C258,718 329,779 390,838C451,898 535,998 563,1030L2240,2884L-260,5384L-4562,1727Z"/>
<path fill="#c8c8c8" d="M-2061,-774L44,575C70,592 142,631 200,675C258,719 330,781 390,840C450,899 533,998 561,1030L2236,2887L-264,5387L-4561,1726Z"/>
<path fill="#c9c9c9" d="M-2059,-775L44,576C70,593 142,632 200,676C258,721 330,783 390,842C450,901 531,999 559,1030L2232,2888L-268,5388L-4559,1725Z"/>
<path fill="#cacaca" d="M-2058,-776L44,577C70,594 142,633 200,678C258,722 330,785 390,844C450,903 529,999 557,1030L2228,2890L-272,5390L-4558,1724Z"/>
<path fill="#cbcbcb" d="M-2057,-777L44,578C70,595 142,634 200,679C258,723 331,787 390,846C449,904 528,999 555,1030L2224,2892L-276,5392L-4557,1723Z"/>
<path fill="#cccccc" d="M-2056,-778L44,579C70,596 142,635 200,680C258,725 331,789 390,848C449,906 526,1000 553,1030L2219,2894L-281,5394L-4556,1722Z"/>
<path fill="#cdcdcd" d="M-2054,-779L44,580C70,597 142,636 200,681C258,726 332,791 390,850C448,908 524,1000 551,1030L2215,2896L-285,5396L-4554,1721Z"/>
<path fill="#cecece" d="M-2053,-780L44,581C70,598 142,637 200,682C258,728 332,794 390,851C448,909 523,1000 550,1030L2217,2893L-283,5393L-4553,1720Z"/>
<path fill="#cfcfcf" d="M-2052,-781L44,582C70,599 142,639 200,684C258,729 332,796 390,853C448,911 522,1001 549,1030L2218,2890L-282,5390L-4552,1719Z"/>
<path fill="#d0d0d0" d="M-2050,-782L44,583C70,600 142,640 200,685C258,730 332,798 390,855C448,913 521,1001 547,1030L2220,2888L-280,5388L-4550,1718Z"/>
<path fill="#d1d1d1" d="M-2049,-783L44,584C70,601 142,641 200,686C258,732 332,800 390,857C448,914 520,1001 546,1030L2222,2885L-278,5385L-4549,1717Z"/>
<path fill="#d2d2d2" d="M-2048,-783L44,585C70,602 142,642 200,688C258,733 333,802 390,859C447,916 519,1002 545,1030L2224,2882L-276,5382L-4548,1717Z"/>
<path fill="#d3d3d3" d="M-2047,-784L44,586C70,604 142,643 200,689C258,734 333,804 390,861C447,918 518,1002 544,1030L2226,2880L-274,5380L-4547,1716Z"/>
<path fill="#d4d4d4" d="M-2045,-785L44,588C70,605 142,644 200,690C258,736 333,806 390,863C447,920 517,1002 542,1030L2228,2877L-272,5377L-4545,1715Z"/>
<path fill="#d5d5d5" d="M-2044,-786L44,589C70,606 142,645 200,691C258,737 333,808 390,865C447,921 516,1002 541,1030L2229,2874L-271,5374L-4544,1714Z"/>
<path fill="#d6d6d6" d="M-2043,-787L44,590C70,607 142,646 200,692C258,739 333,810 390,867C447,923 515,1003 540,1030L2232,2871L-268,5371L-4543,1713Z"/>
<path fill="#d7d7d7" d="M-2042,-788L44,591C70,608 142,647 200,694C258,740 334,813 390,869C446,925 514,1003 539,1030L2234,2868L-266,5368L-4542,1712Z"/>
<path fill="#d8d8d8" d="M-2040,-789L44,592C70,609 142,649 200,695C258,741 334,815 390,870C446,926 513,1003 538,1030L2236,2865L-264,5365L-4540,1711Z"/>
<path fill="#d9d9d9" d="M-2039,-790L44,593C70,610 142,650 200,696C258,743 334,817 390,872C446,928 512,1004 536,1030L2238,2862L-262,5362L-4539,1710Z"/>
<path fill="#dadada" d="M-2038,-791L44,594C70,611 142,651 200,698C258,744 334,819 390,874C446,930 511,1004 535,1030L2240,2858L-260,5358L-4538,1709Z"/>
<path fill="#dbdbdb" d="M-2036,-792L44,595C70,612 142,652 200,699C258,746 334,821 390,876C446,931 510,1004 534,1030L2243,2855L-257,5355L-4536,1708Z"/>
<path fill="#dcdcdc" d="M-2035,-792L44,596C70,613 142,653 200,700C258,747 335,823 390,878C445,933 509,1005 533,1030L2245,2852L-255,5352L-4535,1708Z"/>
<path fill="#dddddd" d="M-2035,-792L44,597C70,614 142,654 200,701C258,748 335,825 390,880C445,935 508,1005 532,1030L2248,2848L-252,5348L-4535,1708Z"/>
<path fill="#dedede" d="M-2035,-791L44,598C70,615 142,655 200,702C258,749 335,826 390,881C445,935 507,1005 530,1030L2244,2851L-256,5351L-4535,1709Z"/>
<path fill="#dfdfdf" d="M-2034,-790L44,599C70,616 142,656 200,703C258,750 335,827 390,882C445,936 506,1005 529,1030L2240,2853L-260,5353L-4534,1710Z"/>
<path fill="#e0e0e0" d="M-2034,-790L44,600C70,617 142,657 200,704C258,751 335,828 390,882C445,937 505,1005 528,1030L2235,2856L-265,5356L-4534,1710Z"/>
<path fill="#e1e1e1" d="M-2032,-792L44,601C70,618 142,658 200,705C258,752 336,829 390,883C444,937 504,1006 527,1030L2231,2859L-269,5359L-4532,1708Z"/>
<path fill="#e2e2e2" d="M-2030,-794L44,602C70,619 142,659 200,706C258,754 336,830 390,884C444,938 503,1006 526,1030L2227,2861L-273,5361L-4530,1706Z"/>
<path fill="#e3e3e3" d="M-2028,-796L44,602C70,620 142,660 200,708C258,755 336,831 390,885C444,939 502,1006 524,1030L2223,2864L-277,5364L-4528,1704Z"/>
<path fill="#e4e4e4" d="M-2026,-799L44,603C70,621 142,661 200,709C258,756 336,832 390,886C444,939 501,1006 523,1030L2219,2867L-281,5367L-4526,1701Z"/>
<path fill="#e5e5e5" d="M-2024,-801L44,604C70,621 142,663 200,710C258,757 336,833 390,887C444,940 500,1006 522,1030L2214,2870L-286,5370L-4524,1699Z"/>
<path fill="#e6e6e6" d="M-2022,-803L44,604C70,622 142,664 200,711C258,758 337,834 390,888C443,941 499,1006 521,1030L2210,2873L-290,5373L-4522,1697Z"/>
<path fill="#e7e7e7" d="M-2020,-805L44,605C70,623 142,665 200,712C258,759 337,835 390,888C443,941 498,1006 519,1030L2206,2876L-294,5376L-4520,1695Z"/>
<path fill="#e8e8e8" d="M-2018,-807L44,606C70,624 142,666 200,713C258,760 337,836 390,889C443,942 497,1007 518,1030L2201,2879L-299,5379L-4518,1693Z"/>
<path fill="#e9e9e9" d="M-2016,-810L44,607C70,625 142,667 200,714C258,761 337,837 390,890C443,943 496,1007 517,1030L2197,2882L-303,5382L-4516,1690Z"/>
<path fill="#eaeaea" d="M-2014,-812L44,608C70,625 142,668 200,715C258,762 337,838 390,891C443,943 495,1007 516,1030L2192,2885L-308,5385L-4514,1688Z"/>
<path fill="#ebebeb" d="M-2012,-814L44,608C70,626 142,669 200,716C258,763 338,839 390,892C442,944 494,1007 515,1030L2188,2888L-312,5388L-4512,1686Z"/>
<path fill="#ececec" d="M-2010,-816L44,609C70,627 142,670 200,717C258,764 338,840 390,892C442,945 493,1007 513,1030L2183,2891L-317,5391L-4510,1684Z"/>
<path fill="#ededed" d="M-2008,-818L44,610C70,628 142,671 200,718C258,766 338,841 390,893C442,945 492,1007 512,1030L2178,2894L-322,5394L-4508,1682Z"/>
<path fill="#eeeeee" d="M-2006,-820L44,610C70,629 142,672 200,719C258,767 338,842 390,894C442,946 491,1007 511,1030L2173,2897L-327,5397L-4506,1680Z"/>
<path fill="#efefef" d="M-2004,-823L44,611C70,629 142,673 200,720C258,768 338,843 390,895C442,947 490,1008 510,1030L2168,2900L-332,5400L-4504,1677Z"/>
<path fill="#f0f0f0" d="M-2002,-825L44,612C70,630 142,674 200,722C258,769 339,844 390,896C441,947 489,1008 508,1030L2163,2904L-337,5404L-4502,1675Z"/>
<path fill="#f1f1f1" d="M-2000,-827L44,613C70,631 142,675 200,723C258,770 339,845 390,897C441,948 488,1008 507,1030L2158,2907L-342,5407L-4500,1673Z"/>
<path fill="#f2f2f2" d="M-1998,-829L44,614C70,632 142,676 200,724C258,771 339,846 390,898C441,949 487,1008 506,1030L2153,2910L-347,5410L-4498,1671Z"/>
<path fill="#f3f3f3" d="M-1996,-831L44,614C70,633 142,677 200,725C258,772 339,847 390,898C441,949 486,1008 505,1030L2148,2914L-352,5414L-4496,1669Z"/>
<path fill="#f4f4f4" d="M-1994,-833L44,615C70,633 142,678 200,726C258,773 339,848 390,899C441,950 485,1008 504,1030L2143,2917L-357,5417L-4494,1667Z"/>
<path fill="#f5f5f5" d="M-1997,-827L44,617C70,635 142,680 200,727C258,774 340,849 390,900C440,951 484,1008 502,1030L2138,2921L-362,5421L-4497,1673Z"/>
<path fill="#f6f6f6" d="M-2001,-820L44,618C70,637 142,681 200,728C258,775 340,851 390,902C440,952 483,1009 501,1030L2139,2918L-361,5418L-4501,1680Z"/>
<path fill="#f7f7f7" d="M-1999,-821L44,620C70,638 142,683 200,730C258,777 340,854 390,904C440,954 482,1009 500,1030L2141,2916L-359,5416L-4499,1679Z"/>
<path fill="#f8f8f8" d="M-1998,-821L44,622C70,640 142,684 200,732C258,779 340,856 390,905C440,955 479,1009 497,1030L2128,2925L-372,5425L-4498,1679Z"/>
<path fill="#f9f9f9" d="M-1996,-822L44,623C70,642 142,686 200,734C258,781 341,858 390,907C439,957 477,1010 494,1030L2115,2934L-385,5434L-4496,1678Z"/>
<path fill="#fafafa" d="M-1995,-822L44,625C70,643 142,688 200,736C258,783 341,860 390,909C439,958 475,1010 492,1030L2101,2943L-399,5443L-4495,1678Z"/>
<path fill="#fbfbfb" d="M-1993,-823L44,626C70,645 142,690 200,737C258,785 342,862 390,911C438,960 472,1010 489,1030L2086,2953L-414,5453L-4493,1677Z"/>
<path fill="#fcfcfc" d="M-1991,-823L44,628C70,647 142,692 200,739C258,787 342,864 390,913C438,961 470,1010 486,1030L2071,2963L-429,5463L-4491,1677Z"/>
<path fill="#fdfdfd" d="M-1990,-824L44,630C70,648 142,694 200,741C258,789 343,866 390,914C437,963 468,1011 484,1030L2056,2974L-444,5474L-4490,1676Z"/>
<path fill="#fefefe" d="M-1988,-824L44,631C70,650 142,696 200,743C258,791 343,868 390,916C437,964 466,1011 481,1030L2039,2985L-461,5485L-4488,1676Z"/>
<path fill="#ffffff" d="M-1987,-825L44,633C70,652 142,698 200,745C258,792 344,870 390,918C436,966 463,1011 478,1030L2023,2996L-477,5496L-4487,1675Z"/>
</svg>
<div id="titlebar" class="abs" style="left:0;top:0;width:1440px;height:39px;background:#f7f7f7;"></div>
<div class="abs" style="left:0px;top:0px;width:497px;height:1px;background:#7d7d7d;"></div>
<div class="abs" style="left:497px;top:0px;width:60px;height:1px;background:#1a7fd6;"></div>
<div class="abs" style="left:557px;top:0px;width:241px;height:1px;background:#e2e2e2;"></div>
<div class="abs" style="left:798px;top:0px;width:642px;height:1px;background:#5a5a5a;"></div>
<div class="abs" style="left:0px;top:39px;width:1440px;height:1px;background:#9c9c9c;"></div>
<div class="abs" style="left:169px;top:4px;width:32px;height:32px;background:#b2b2b2;box-sizing:border-box;border:1px solid #7a7a7a;"></div>
<div class="abs" style="left:201px;top:4px;width:15px;height:32px;background:#fbfbfb;box-sizing:border-box;border:1px solid #9a9a9a;border-left:none;"></div>
<span class="t" style="left:667.60px;top:12.15px;font-size:14px;line-height:18px;letter-spacing:-0.572px;color:#1e1e1e;">Card Clip V7.SLDPRT *</span>
<div class="abs" style="left:1143px;top:6px;width:252px;height:29px;background:#fdfdfd;box-sizing:border-box;border:1px solid #ababab;"></div>
<span class="t" style="left:1175.67px;top:11.95px;font-size:14px;line-height:18px;letter-spacing:-1.007px;color:#5a5a5a;">Search SOLIDWORKS Help</span>
<div id="ribbon" class="abs" style="left:0;top:40px;width:1440px;height:81px;background:#f7f7f7;"></div>
<div class="abs" style="left:0px;top:121px;width:1440px;height:1px;background:#9c9c9c;"></div>
<div class="abs" style="left:338px;top:42px;width:1px;height:77px;background:#cfcfcf;"></div>
<div class="abs" style="left:635px;top:42px;width:1px;height:77px;background:#cfcfcf;"></div>
<div class="abs" style="left:761px;top:42px;width:1px;height:77px;background:#cfcfcf;"></div>
<div class="abs" style="left:763px;top:41px;width:71px;height:78px;background:#b2b2b2;box-sizing:border-box;border:1px solid #5e5e5e;"></div>
<span class="t" style="left:5.38px;top:67.15px;font-size:14px;line-height:18px;letter-spacing:-0.149px;color:#1e1e1e;">Extruded</span>
<span class="t" style="left:21.50px;top:85.85px;font-size:14px;line-height:18px;letter-spacing:0.215px;color:#1e1e1e;">Cut</span>
<span class="t" style="left:69.68px;top:67.15px;font-size:14px;line-height:18px;letter-spacing:-0.207px;color:#1e1e1e;">Hole Wizard</span>
<span class="t" style="left:153.58px;top:67.15px;font-size:14px;line-height:18px;letter-spacing:-0.403px;color:#1e1e1e;">Revolved</span>
<span class="t" style="left:169.60px;top:85.85px;font-size:14px;line-height:18px;letter-spacing:0.165px;color:#1e1e1e;">Cut</span>
<span class="t" style="left:241.87px;top:44.95px;font-size:14px;line-height:18px;letter-spacing:-0.214px;color:#1e1e1e;">Swept Cut</span>
<span class="t" style="left:241.38px;top:70.85px;font-size:14px;line-height:18px;letter-spacing:0.087px;color:#1e1e1e;">Lofted Cut</span>
<span class="t" style="left:241.38px;top:96.65px;font-size:14px;line-height:18px;letter-spacing:-0.020px;color:#1e1e1e;">Boundary Cut</span>
<span class="t" style="left:344.18px;top:67.15px;font-size:14px;line-height:18px;letter-spacing:-0.244px;color:#1e1e1e;">Fillet</span>
<span class="t" style="left:382.18px;top:67.15px;font-size:14px;line-height:18px;letter-spacing:-0.074px;color:#1e1e1e;">Linear Pattern</span>
<span class="t" style="left:501.38px;top:44.95px;font-size:14px;line-height:18px;letter-spacing:-0.510px;color:#1e1e1e;">Rib</span>
<span class="t" style="left:501.38px;top:70.85px;font-size:14px;line-height:18px;letter-spacing:0.202px;color:#1e1e1e;">Draft</span>
<span class="t" style="left:501.87px;top:96.65px;font-size:14px;line-height:18px;letter-spacing:-0.602px;color:#1e1e1e;">Shell</span>
<span class="t" style="left:571.30px;top:44.95px;font-size:14px;line-height:18px;letter-spacing:-0.207px;color:#1e1e1e;">Wrap</span>
<span class="t" style="left:570.04px;top:70.85px;font-size:14px;line-height:18px;letter-spacing:0.005px;color:#1e1e1e;">Intersect</span>
<span class="t" style="left:570.18px;top:96.65px;font-size:14px;line-height:18px;letter-spacing:0.684px;color:#1e1e1e;">Mirror</span>
<span class="t" style="left:641.38px;top:67.15px;font-size:14px;line-height:18px;letter-spacing:-0.615px;color:#1e1e1e;">Referenc...</span>
<span class="t" style="left:712.60px;top:67.15px;font-size:14px;line-height:18px;letter-spacing:-0.358px;color:#1e1e1e;">Curves</span>
<span class="t" style="left:767.54px;top:67.15px;font-size:14px;line-height:18px;letter-spacing:0.271px;color:#1e1e1e;">Instant3D</span>
<div class="abs" style="left:103.4px;top:106.5px;width:0;height:0;border-left:3.5px solid transparent;border-right:3.5px solid transparent;border-top:4px solid #3a3a3a;"></div>
<div class="abs" style="left:355.5px;top:106.5px;width:0;height:0;border-left:3.5px solid transparent;border-right:3.5px solid transparent;border-top:4px solid #3a3a3a;"></div>
<div class="abs" style="left:422.5px;top:106.5px;width:0;height:0;border-left:3.5px solid transparent;border-right:3.5px solid transparent;border-top:4px solid #3a3a3a;"></div>
<div class="abs" style="left:669.7px;top:106.5px;width:0;height:0;border-left:3.5px solid transparent;border-right:3.5px solid transparent;border-top:4px solid #3a3a3a;"></div>
<div class="abs" style="left:730.5px;top:106.5px;width:0;height:0;border-left:3.5px solid transparent;border-right:3.5px solid transparent;border-top:4px solid #3a3a3a;"></div>
<div id="tabs" class="abs" style="left:0;top:122px;width:933px;height:28px;background:#d4d4d4;box-sizing:border-box;border-bottom:1px solid #b4b4b4;border-right:1px solid #b9b9b9;"></div>
<div class="abs" style="left:109px;top:122px;width:1px;height:27px;background:#a2a2a2;"></div>
<div class="abs" style="left:282px;top:122px;width:1px;height:27px;background:#a2a2a2;"></div>
<div class="abs" style="left:373px;top:122px;width:1px;height:27px;background:#a2a2a2;"></div>
<div class="abs" style="left:429px;top:122px;width:1px;height:27px;background:#a2a2a2;"></div>
<div class="abs" style="left:586px;top:122px;width:1px;height:27px;background:#a2a2a2;"></div>
<div class="abs" style="left:774px;top:122px;width:1px;height:27px;background:#a2a2a2;"></div>
<div class="abs" style="left:0;top:122px;width:109px;height:27px;overflow:hidden;"><span class="t" style="left:-15.36px;top:4.88px;font-size:14.5px;line-height:19px;letter-spacing:0.235px;color:#1e1e1e;">MBD Dimensions</span></div>
<span class="t" style="left:121.85px;top:126.88px;font-size:14.5px;line-height:19px;letter-spacing:-0.169px;color:#1e1e1e;">SOLIDWORKS Add-Ins</span>
<span class="t" style="left:292.65px;top:126.88px;font-size:14.5px;line-height:19px;letter-spacing:0.423px;color:#1e1e1e;">Simulation</span>
<span class="t" style="left:384.14px;top:126.88px;font-size:14.5px;line-height:19px;letter-spacing:0.911px;color:#1e1e1e;">MBD</span>
<span class="t" style="left:441.85px;top:126.88px;font-size:14.5px;line-height:19px;letter-spacing:-0.465px;color:#1e1e1e;">SOLIDWORKS CAM</span>
<span class="t" style="left:599.65px;top:126.88px;font-size:14.5px;line-height:19px;letter-spacing:-0.336px;color:#1e1e1e;">SOLIDWORKS CAM TBM</span>
<span class="t" style="left:787.50px;top:126.88px;font-size:14.5px;line-height:19px;letter-spacing:0.063px;color:#1e1e1e;">Analysis Preparation</span>
<div id="leftpanel" class="abs" style="left:0;top:150px;width:11px;height:886px;background:#f7f7f7;border-right:1px solid #808080;"></div>
<div class="abs" style="left:11px;top:554px;width:12px;height:49px;background:#f7f7f7;box-sizing:border-box;border:1px solid #7c7c7c;border-left:none;"></div>
<div class="abs" style="left:11px;top:555px;width:1px;height:47px;background:#f7f7f7;"></div>
<div class="abs" style="left:12.7px;top:574.8px;width:4px;height:4px;border-radius:50%;background:#d0d0d0;border:0.8px solid #8a8a8a;"></div>
<div class="abs" style="left:0px;top:525px;width:9px;height:4px;background:#2e8bc9;"></div>
<div class="abs" style="left:0px;top:152px;width:9px;height:2px;background:#e6e6e6;border-bottom:1px solid #cfcfcf;border-right:1px solid #cfcfcf;"></div>
<div class="abs" style="left:0px;top:174px;width:9px;height:1px;background:#d9d9d9;"></div>
<div class="abs" style="left:0px;top:179px;width:9px;height:1px;background:#7c7c7c;"></div>
<div class="abs" style="left:-3px;top:188.5px;width:5px;height:5px;border-radius:50%;background:#3a3a3a;"></div>
<div class="abs" style="left:0px;top:201px;width:9px;height:3px;background:#dedede;"></div>
<div class="abs" style="left:-1px;top:205px;width:6px;height:31px;background:#f9f9f9;border:1px solid #c9c9c9;"></div>
<span class="t" style="left:-1.40px;top:240.92px;font-size:13.5px;line-height:18px;letter-spacing:0.000px;color:#1c2f6b;">t&gt;</span>
<div class="abs" style="left:0px;top:1011px;width:9px;height:22px;background:#ececec;"></div>
<div class="abs" style="left:-1px;top:1016px;width:0;height:0;border-top:4px solid transparent;border-bottom:4px solid transparent;border-left:4px solid #555;"></div>
<div class="abs" style="left:0px;top:1036px;width:1440px;height:1px;background:#8c8c8c;"></div>
<div id="bottomtabs" class="abs" style="left:0;top:1037px;width:1440px;height:19px;background:#f7f7f7;"></div>
<div class="abs" style="left:0px;top:1037px;width:130px;height:19px;background:#d4d4d4;border-right:1px solid #9c9c9c;"></div>
<span class="t" style="left:-0.40px;top:1036.50px;font-size:15px;line-height:20px;letter-spacing:0.487px;color:#1e1e1e;">Motion Study 1</span>
<div class="abs" style="left:0px;top:1056px;width:1440px;height:1px;background:#9c9c9c;"></div>
<div id="statusbar" class="abs" style="left:0;top:1057px;width:1440px;height:21px;background:#f7f7f7;"></div>
<span class="t" style="left:-0.97px;top:1059.00px;font-size:15px;line-height:20px;letter-spacing:-0.383px;color:#1e1e1e;">Only</span>
<span class="t" style="left:1284.60px;top:1059.80px;font-size:15px;line-height:20px;letter-spacing:-0.107px;color:#1e1e1e;">Editing Part</span>
<div class="abs" style="left:0px;top:1078px;width:178px;height:2px;background:#d9d9d9;"></div>
<div class="abs" style="left:178px;top:1078px;width:1262px;height:2px;background:#3b3b32;"></div>
<svg id="model" style="left:0;top:0" width="1440" height="1080" viewBox="0 0 1440 1080">
<g stroke="#000" stroke-width="1.4" stroke-linejoin="round" stroke-linecap="round">
<path d="M476.7,266.7 C477.0,263.9 477.2,254.4 478.3,250.0 C479.4,245.6 480.8,243.5 483.3,240.0 C485.8,236.5 489.1,232.7 493.3,229.2 C497.5,225.7 502.7,222.1 508.3,219.2 C513.9,216.3 520.3,213.7 526.7,211.7 C533.1,209.7 539.8,208.1 546.7,207.0 C553.6,205.9 561.1,205.3 568.3,205.0 C575.5,204.7 583.0,204.7 590.0,205.0 C597.0,205.3 602.8,205.9 610.0,206.7 C617.2,207.5 627.5,208.8 633.3,209.6 C639.1,210.4 641.1,210.9 645.0,211.8 C648.9,212.7 651.8,213.3 656.7,214.8 C661.7,216.3 668.2,218.4 674.7,220.8 C681.2,223.2 688.7,226.1 695.6,229.2 C702.5,232.3 709.5,235.8 716.4,239.6 C723.3,243.4 730.2,247.8 737.2,252.1 C744.2,256.4 751.2,260.9 758.1,265.3 C765.0,269.7 775.4,276.3 778.9,278.5 L1093.9,481.9 L1060.6,495.0 Q1040,493.8 1020.3,490.3 L999.4,497.2 L999.4,520.0 L965.6,531.1 L661.9,336.9 L670.3,480.0 L672.2,559.7 L624.4,553.6 L596.1,536.4 L593.3,480.0 L588.0,375.0 L582.8,265.8 L552.7,262.5 L558.3,375.0 L563.9,480.0 L566.1,532.8 L538.3,544.4 L490.6,538.9 L488.3,480.0 L482.5,375.0 Z" fill="#b10000"/>
<polygon fill="#b90604" points="476.7,266.7 439.7,480.0 407.8,673.6 413.3,780.0 421.7,949.4 450.0,780.0 490.6,538.9 488.3,480.0 482.5,375.0"/>
<polygon fill="#b90604" points="582.8,265.8 559.8,398.0 563.9,480.0 566.1,532.8 525.6,780.0 518.9,810.6 526.7,946.0 554.4,780.0 596.1,536.4 593.3,480.0 588.0,375.0"/>
<polygon fill="#8b0000" points="552.7,262.5 582.8,265.8 559.8,398.0"/>
<polygon fill="#8b0000" points="490.6,538.9 538.3,544.4 500.0,780.0 468.9,954.4 421.7,949.4 450.0,780.0"/>
<polygon fill="#7d0000" points="538.3,544.4 566.1,532.8 525.6,780.0 498.0,942.5 468.9,954.4 500.0,780.0"/>
<polygon fill="#7a0000" points="661.9,336.9 965.6,531.1 936.9,700.0 896.7,941.7 637.0,775.0 672.2,559.7 670.3,480.0"/>
<polygon fill="#7a0000" points="965.6,531.1 999.4,520.0 968.9,700.0 930.6,929.2 896.7,941.7 936.9,700.0"/>
<polygon fill="#7d0000" points="596.1,536.4 624.4,553.6 587.8,780.0 555.6,963.9 526.7,946.1 554.4,780.0"/>
<polygon fill="#8b0000" points="624.4,553.6 672.2,559.7 637.0,775.0 603.6,969.7 555.6,963.9 587.8,780.0"/>
<polygon fill="#7a0000" points="651.3,253.3 1020.3,490.3 985.0,700.0 951.4,900.0 937.0,891.7 968.9,700.0 999.4,520.0 999.4,497.2 648.3,272.0"/>
<polygon fill="#800000" points="630.8,261.3 651.3,253.3 648.3,272.0"/>
<path fill="#8b0000" d="M1020.3,490.3 Q1040,493.8 1060.6,495 L1025.8,700 L991.7,905 L951.4,900 L985,700 Z"/>
<polygon fill="#7a0000" points="1060.6,495.0 1093.9,481.9 1059.0,700.0 1025.8,891.7 991.7,905.0 1025.8,700.0"/>
</g>
</svg>
<svg id="icons" style="left:0;top:0" width="1440" height="1080" viewBox="0 0 1440 1080">
<defs><linearGradient id="gb" x1="0" y1="0" x2="1" y2="1"><stop offset="0" stop-color="#9ad3f0"/><stop offset="1" stop-color="#2a79a6"/></linearGradient><linearGradient id="gg" x1="0" y1="0" x2="1" y2="1"><stop offset="0" stop-color="#ffffff"/><stop offset="1" stop-color="#cfcfcf"/></linearGradient><linearGradient id="gm" x1="0" y1="0" x2="0" y2="1"><stop offset="0" stop-color="#8f8f8f"/><stop offset="1" stop-color="#b9b9b9"/></linearGradient><radialGradient id="gl" cx="0.4" cy="0.35" r="0.7"><stop offset="0" stop-color="#d5d9dc"/><stop offset="1" stop-color="#8d9498"/></radialGradient></defs>
<g><rect x="-12" y="11" width="17.6" height="17.4" rx="1.2" fill="#2476a6" stroke="#174c6c" stroke-width="1"/><rect x="-8" y="12" width="11" height="7.6" fill="#e8eef2"/><rect x="-6" y="22" width="8" height="6" fill="#1b5b82"/></g>
<polygon points="17.8,17.9 23.6,17.9 20.7,21.3" fill="#333"/>
<polygon points="64.6,17.9 70.4,17.9 67.5,21.3" fill="#333"/>
<polygon points="111.4,17.9 117.2,17.9 114.3,21.3" fill="#333"/>
<polygon points="158.5,17.9 164.3,17.9 161.4,21.3" fill="#9a9a9a"/>
<polygon points="205.5,17.9 211.3,17.9 208.4,21.3" fill="#333"/>
<polygon points="318.5,17.9 324.3,17.9 321.4,21.3" fill="#333"/>
<g stroke-linejoin="round"><rect x="38.2" y="11.3" width="11.4" height="7.6" fill="url(#gg)" stroke="#4a4a4a" stroke-width="1"/><rect x="36.4" y="24.6" width="15.2" height="3.9" rx="1" fill="#ececec" stroke="#4a4a4a" stroke-width="1"/><rect x="35.2" y="18" width="17.6" height="7.2" rx="1.6" fill="#2c86bb" stroke="#1a577c" stroke-width="1"/><rect x="36.2" y="19" width="15.6" height="1.6" fill="#7cc4ea"/><rect x="37.6" y="22.6" width="12.8" height="1.8" fill="#15415d"/></g>
<g><path d="M83.2,12.9 L83.2,20.6 L91.2,20.3 L88.6,17.7 C92.5,16.2 95.9,18.6 95.3,22.2 C94.9,24.3 93.6,25.3 92.7,25.9 L95.4,27 C97.9,25.2 99.5,22.6 98.9,19.3 C97.9,14.6 92,12.3 86.4,15.6 Z" fill="#2c7fb0" stroke="#1c587c" stroke-width="0.8" stroke-linejoin="round"/></g>
<g transform="translate(229.3,0) scale(-1,1)"><path d="M83.2,12.9 L83.2,20.6 L91.2,20.3 L88.6,17.7 C92.5,16.2 95.9,18.6 95.3,22.2 C94.9,24.3 93.6,25.3 92.7,25.9 L95.4,27 C97.9,25.2 99.5,22.6 98.9,19.3 C97.9,14.6 92,12.3 86.4,15.6 Z" fill="#d6d6d6" stroke="#c2c2c2" stroke-width="0.8" stroke-linejoin="round"/></g>
<polygon points="179.5,10.9 179.5,25.6 183.3,22.7 186.2,27.7 188.7,26.6 186.2,21.5 190.9,20.9" fill="#ffffff" stroke="#2a2a2a" stroke-width="1.1" stroke-linejoin="round"/>
<g><rect x="227.2" y="11.2" width="9.8" height="17.6" rx="4.9" fill="#1c1c1c"/><circle cx="232.1" cy="16" r="2.7" fill="#e2231a"/><circle cx="231.6" cy="15.3" r="0.9" fill="#ff8d80"/><circle cx="232.1" cy="24" r="2.7" fill="#1f9a1f"/><circle cx="231.6" cy="23.3" r="0.9" fill="#8fe08a"/></g>
<g><rect x="257.4" y="11.6" width="15" height="16.8" rx="1.4" fill="url(#gg)" stroke="#2f2f2f" stroke-width="1.2"/>
<rect x="259.4" y="13.6" width="4.2" height="2.9" fill="#3a8fc2" stroke="#1d5c82" stroke-width="0.6"/><rect x="265.2" y="14.6" width="5.6" height="0.9" fill="#2f2f2f"/>
<rect x="259.4" y="18.9" width="4.2" height="2.9" fill="#3a8fc2" stroke="#1d5c82" stroke-width="0.6"/><rect x="265.2" y="19.9" width="5.6" height="0.9" fill="#2f2f2f"/>
<rect x="259.4" y="24.0" width="4.2" height="2.9" fill="#3a8fc2" stroke="#1d5c82" stroke-width="0.6"/><rect x="265.2" y="25.0" width="5.6" height="0.9" fill="#2f2f2f"/>
</g>
<path d="M296.55,12.02L299.25,12.02L299.47,14.01L300.96,14.62L302.52,13.37L304.43,15.28L303.18,16.84L303.79,18.33L305.78,18.55L305.78,21.25L303.79,21.47L303.18,22.96L304.43,24.52L302.52,26.43L300.96,25.18L299.47,25.79L299.25,27.78L296.55,27.78L296.33,25.79L294.84,25.18L293.28,26.43L291.37,24.52L292.62,22.96L292.01,21.47L290.02,21.25L290.02,18.55L292.01,18.33L292.62,16.84L291.37,15.28L293.28,13.37L294.84,14.62L296.33,14.01Z" fill="#fbfbfb" stroke="#333" stroke-width="1.1" stroke-linejoin="round"/><circle cx="297.9" cy="19.9" r="2.9" fill="#f7f7f7" stroke="#333" stroke-width="1.1"/>
<g><circle cx="1159" cy="19.8" r="8.2" fill="url(#gg)" stroke="#4a4a4a" stroke-width="1"/></g>
<g fill="none" stroke="#6b6b6b" stroke-width="1.4"><circle cx="1362.6" cy="17.6" r="5.1"/><path d="M1366.4,21.6 L1372.6,27.6" stroke-width="1.8"/></g>
<polygon points="1382.6,17.7 1388.6,17.7 1385.6,21.1" fill="#555"/>
<g fill="none" stroke="#333" stroke-width="1.2"><circle cx="1419" cy="19.8" r="8.3"/><circle cx="1419" cy="17.2" r="3.1"/><path d="M1413,25.4 C1414,21.4 1424,21.4 1425,25.4"/></g>
<g stroke="#3c3c3c" stroke-width="1.05" stroke-linejoin="round"><polygon points="26.2,49.3 38,47 41.3,48.2 28.5,50.5" fill="#f4f4f4"/><polygon points="26.2,49.3 28.5,50.5 29.5,64.6 26.6,61.6" fill="#d9d9d9"/><polygon points="28.5,50.5 41.3,48.2 41.3,60.8 29.5,64.6" fill="url(#gg)"/><polygon points="31.2,53.2 39,51.8 39,59.4 31.4,61.2" fill="#2a79a6" stroke="#1b587c"/><polygon points="31.8,53.8 34.6,53.3 34.6,57 31.9,57.6" fill="#fff" stroke="none"/><polygon points="31.9,57.6 37,56.4 38.4,59 31.9,60.6" fill="#8ccbec" stroke="none"/></g>
<g stroke="#3c3c3c" stroke-width="1.05" stroke-linejoin="round"><polygon points="98.2,51.6 106.5,49.2 113.6,52 104.8,54.8" fill="#f6f6f6"/><polygon points="98.2,51.6 104.8,54.8 104.8,65.4 98.4,61.6" fill="url(#gg)"/><polygon points="104.8,54.8 113.6,52 113.6,61.6 104.8,65.4" fill="#ececec"/><ellipse cx="108.8" cy="58.2" rx="3.4" ry="3.6" fill="#2a79a6" stroke="#1b587c"/><ellipse cx="108.1" cy="57.4" rx="1.5" ry="1.7" fill="#9fd6f2" stroke="none"/><path d="M108.6,50 L115.6,56.4" stroke="#111" stroke-width="2" fill="none"/><polygon points="107.3,46.9 108.2,48.4 109.9,48.6 108.6,49.8 108.9,51.5 107.3,50.7 105.8,51.5 106.1,49.8 104.8,48.6 106.5,48.4" fill="#ffc928" stroke="#e08a10" stroke-width="0.4"/><g fill="#e8830c" stroke="none"><rect x="101.8" y="48.5" width="1.6" height="1.6" transform="rotate(45 102.6 49.3)"/><rect x="111.8" y="47.6" width="1.7" height="1.7" transform="rotate(45 112.6 48.4)"/><rect x="115.1" y="50" width="1" height="1"/><rect x="103.9" y="47" width="0.9" height="0.9"/></g></g>
<g stroke="#3c3c3c" stroke-width="1.05" stroke-linejoin="round"><path d="M172.2,50.4 L172.2,61 C172.4,63 174.4,64 176.9,64.5 L176.9,53.7 Z" fill="url(#gg)"/><path d="M190,50.4 L190,61 C189.8,63 187.8,64 185.9,64.5 L185.9,53.7 Z" fill="url(#gg)"/><ellipse cx="181.1" cy="50.4" rx="8.9" ry="3.3" fill="#f7f7f7"/><polygon points="176.9,53.7 181.5,50.3 185.9,53.7 185.9,64.5 181.5,60.5 176.9,64.5" fill="url(#gb)" stroke="#17506f"/><path d="M181.5,50.3 L181.5,60.5" stroke="#17506f"/></g>
<g stroke="#3c3c3c" stroke-width="1.05" stroke-linejoin="round"><polygon points="218.2,47.2 231,45.2 233.8,46.4 221.2,48.6" fill="#f4f4f4"/><polygon points="218.2,47.2 221.2,48.6 222.6,62.8 218.6,59.4" fill="#c4c4c4"/><polygon points="221.2,48.6 233.8,46.4 233.8,59 222.6,62.8" fill="url(#gg)"/><path d="M223.4,61.6 C223.6,54 226.6,50 233,48.8 L232,52.4 L233.6,54.6 L233.6,58 L230,59.4 L229.6,57.8 L224.6,59.2 Z" fill="url(#gb)" stroke="#17506f"/><polygon points="230.4,56 233,55 233,58 230.4,59" fill="#f2f2f2" stroke="#17506f" stroke-width="0.6"/></g>
<g stroke="#3c3c3c" stroke-width="1.05" stroke-linejoin="round"><polygon points="218.2,73.6 226.4,71.2 233.8,74 225.8,76.8" fill="#f4f4f4"/><polygon points="218.2,73.6 225.8,76.8 223.6,89 218.4,84.6" fill="url(#gg)"/><polygon points="225.8,76.8 233.8,74 233.8,84 223.6,89" fill="#d9d9d9"/><path d="M226.6,75 L231.8,74.6 C230.6,79 231,82 233.6,84.4 L233.6,85.4 L226,88.2 C228.4,84 228.6,79.6 226.6,75 Z" fill="url(#gb)" stroke="#17506f"/></g>
<g stroke="#3c3c3c" stroke-width="1.05" stroke-linejoin="round"><polygon points="217.2,104.8 222.8,110 234.8,106.6 234.8,101.6 228.8,97.6" fill="#f2f2f2"/><polygon points="217.2,104.8 222.8,110 222.8,114.4 217.4,109" fill="#cfcfcf"/><polygon points="222.8,110 234.8,106.6 234.8,110.8 222.8,114.4" fill="#f0f0f0"/><path d="M217.2,104.8 C220,101.8 224,103.6 228.6,97.4 L234.8,101.4 C230.6,104.4 227.4,104.6 222.8,110 Z" fill="#6bbbe4" stroke="#17506f"/><path d="M220,107.4 C223.4,103.6 227.6,104.2 231.8,99.4 M221.6,102.8 L226.6,106.8 M225.6,101.4 L230.6,104.6" fill="none" stroke="#17506f" stroke-width="0.7"/></g>
<g stroke="#3c3c3c" stroke-width="1.05" stroke-linejoin="round"><path d="M350.2,49.4 L357.6,47.2 C362.6,46.6 367.2,49.2 367.8,54 L367.8,60 L359.2,64.6 L350.2,60.8 Z" fill="url(#gg)"/><path d="M356.4,51.2 C360.6,47.4 366.4,48.4 367.6,54.2 L359.2,57.6 C359,54.2 358.2,52.4 356.4,51.2 Z" fill="url(#gb)" stroke="#17506f"/><path d="M359.2,57.6 L359.2,64.6" fill="none"/><polygon points="359.2,57.6 367.8,54.2 367.8,60 359.2,64.6" fill="#f7f7f7"/></g>
<g><path d="M418.3,47.3 h3.6 v2.2 h3 v3.4 h-3 v1.9 h-3.6 Z" fill="url(#gb)" stroke="#17506f" stroke-width="1" stroke-linejoin="miter" shape-rendering="crispEdges"/><path d="M427.5,47.3 h3.6 v2.2 h3 v3.4 h-3 v1.9 h-3.6 Z" fill="#fafafa" stroke="#333" stroke-width="1" stroke-linejoin="miter" shape-rendering="crispEdges"/><path d="M418.3,56.4 h3.6 v2.2 h3 v3.4 h-3 v1.9 h-3.6 Z" fill="#fafafa" stroke="#333" stroke-width="1" stroke-linejoin="miter" shape-rendering="crispEdges"/><path d="M427.5,56.4 h3.6 v2.2 h3 v3.4 h-3 v1.9 h-3.6 Z" fill="#fafafa" stroke="#333" stroke-width="1" stroke-linejoin="miter" shape-rendering="crispEdges"/></g>
<g stroke="#3c3c3c" stroke-width="1.05" stroke-linejoin="round"><polygon points="486.6,46.8 488.4,45.4 493.6,48.4 493.6,58.2 484.2,63.6 478.2,58.6 479.8,57.2 484.4,60.6 491.6,56.6 491.6,49.6" fill="#f6f6f6"/><polygon points="488.6,48.6 489.8,49.4 489.8,55.6 484.4,58.8 481.6,56.8" fill="url(#gb)" stroke="#17506f"/></g>
<g stroke="#3c3c3c" stroke-width="1.05" stroke-linejoin="round"><polygon points="477.2,75 487.6,72 494.8,79.6 494.8,87.2 489,88 477.2,85.4" fill="#3a8bb9" stroke="#17506f"/><polygon points="477.2,75 487.6,72 494.8,79.6 489,81" fill="#8ccbec" stroke="#17506f"/><polygon points="489,81 494.8,79.6 494.8,87.2 489,88" fill="#fbfbfb"/></g>
<g stroke="#3c3c3c" stroke-width="1.05" stroke-linejoin="round"><polygon points="477.2,100 487.6,97.4 494.8,100 494.8,111 484,115.4 477.2,110" fill="#fbfbfb"/><polygon points="477.2,100 484,103 484,115.4 477.2,110" fill="#e4e4e4"/><polygon points="482,100.6 489.4,99.2 493,100.6 493,109.6 485.6,112.6 485.4,103.4" fill="#2a79a6" stroke="#17506f"/><polygon points="485.6,108 489.6,106.6 492.6,109.4 485.8,112.2" fill="#8ccbec" stroke="none"/><path d="M489.6,99.6 L489.6,106.6" stroke="#17506f" stroke-width="0.6"/></g>
<g stroke="#3c3c3c" stroke-width="1.05" stroke-linejoin="round"><path d="M546.2,48.6 L546.2,58.6 C546.2,63.8 563.6,63.8 563.6,58.6 L563.6,48.6 Z" fill="url(#gg)"/><ellipse cx="554.9" cy="48.6" rx="8.7" ry="3.2" fill="#fafafa"/><path d="M548.4,52.6 C550,53.6 552,54 554,54.2 L554,56 L551.4,55.8 L551.4,58.2 L554,58.6 L554,60.2 C552,60 550,59.6 548.4,58.6 Z" fill="#3d94c6" stroke="#17506f" stroke-width="0.7"/><path d="M556,54.2 C558,54.2 560,53.6 561.6,52.8 L561.6,58.6 C560,59.6 558,60 556,60.2 Z" fill="#6bbbe4" stroke="#17506f" stroke-width="0.7"/><path d="M558.6,54 L558.6,60" stroke="#17506f" stroke-width="0.7"/></g>
<g stroke="#3c3c3c" stroke-width="1.05" stroke-linejoin="round"><path d="M547.4,80.2 C550.4,77.4 553,78.6 556,76.4 L564,76.4 L564,83.8 L560,84.2 L557.4,86.6 C553.4,86.4 550.4,87.2 547.6,89.8 Z" fill="url(#gb)" stroke="#17506f"/><polygon points="551.4,73.6 556.6,71.2 562,73.4 562,80.6 556.4,83.4 551.4,80.6" fill="url(#gg)"/><path d="M551.4,73.6 L556.4,76 L562,73.4 M556.4,76 L556.4,83.4" fill="none"/></g>
<g><path d="M546.2,99.2 h3.8 v5.2 h3.4 v4.4 h-3.4 v5.6 h-3.8 Z" fill="url(#gb)" stroke="#17506f" stroke-width="0.9"/><path d="M564.8,99.2 h-3.8 v5.2 h-3.4 v4.4 h3.4 v5.6 h3.8 Z" fill="#fafafa" stroke="#333" stroke-width="0.9"/><path d="M555.5,97 L555.5,115.2" stroke="#222" stroke-width="1"/></g>
<g><polygon points="670.3,52.6 680.6,49.3 680.6,60.8 670.3,64.8" fill="url(#gb)" stroke="#1d5f86" stroke-width="0.8"/><circle cx="666" cy="50.1" r="2.4" fill="#5aa7d6" stroke="#17506f" stroke-width="0.9"/><path d="M675.6,47.4 L675.6,65.4" stroke="#222" stroke-width="0.9" stroke-dasharray="1.6,1.1"/></g>
<path d="M725,47.6 C729.4,47.8 731.8,50.4 731,54.6 C730.4,57.8 725.8,60.2 728.6,63 C731,65.2 737.4,65 739.2,62 C740.8,59 738.4,55.4 738.2,52 C738,49.4 740.2,48.2 743.2,48" fill="none" stroke="#2c7ba6" stroke-width="1.3" stroke-linecap="round"/>
<g><polygon points="792.5,47 807.5,53.3 806.3,59.6 791.9,52.8" fill="#f3d233" stroke="#9c8216" stroke-width="0.6"/><path d="M795.4,48.4 l-0.5,2.4 M798.4,49.7 l-0.7,3.4 M801.4,51 l-0.5,2.4 M804.4,52.2 l-0.7,3.4" stroke="#5c4c08" stroke-width="0.8"/><path d="M789,54.4 L801,61.2" stroke="#2c7ba6" stroke-width="1.8"/><polygon points="801.6,57.2 806.8,64.6 797.6,64.6" fill="#2c7ba6"/></g>
<g><path d="M640.4,167 L634.6,172.9" stroke="#3a7fb0" stroke-width="3" stroke-linecap="round"/><circle cx="644.4" cy="162.4" r="5.8" fill="url(#gl)" stroke="#70777c" stroke-width="1"/><path d="M644.4,158.6 l1.4,1.7 h-2.8 Z M644.4,166.2 l1.4,-1.7 h-2.8 Z M640.6,162.4 l1.7,-1.4 v2.8 Z M648.2,162.4 l-1.7,-1.4 v2.8 Z" fill="#2a2a2a"/></g>
<g><rect x="663.2" y="155.4" width="14" height="13.8" fill="none" stroke="#8a8a8a" stroke-width="1" stroke-dasharray="2.4,1.6"/><path d="M664.4,169 L659.8,173.6" stroke="#3a7fb0" stroke-width="3" stroke-linecap="round"/><circle cx="668.2" cy="164.8" r="6" fill="url(#gl)" stroke="#70777c" stroke-width="1"/></g>
<g><polygon points="686.6,167.6 699.4,157 702.2,160.4 690.6,173.4 687,172.6" fill="#b5b8ba" stroke="#6c7073" stroke-width="0.8"/><polygon points="699.2,156.6 701.4,155.8 703.4,158.6 702.4,160.6" fill="#8a8e91"/><ellipse cx="688.8" cy="170.4" rx="2" ry="2.8" transform="rotate(-38 688.8 170.4)" fill="#e3e5e6" stroke="#6c7073" stroke-width="0.6"/><polygon points="693,169.4 698,165.4 698,167.8 703.8,167.8 703.8,171 698,171 698,173.4" fill="#2e78a8"/></g>
<g><path d="M714,163 C714,156.8 727,156.8 727,163 L727,170 L723.4,170 L723.4,163.6 C723.4,161.8 717.6,161.8 717.6,163.6 L717.6,170 L714,170 Z" fill="#a9adb0" stroke="#6a6e71" stroke-width="0.7"/><polygon points="712,162.2 717.2,160.6 717.2,172.6 712,174.2" fill="#3a7fb0" stroke="#1e587c" stroke-width="0.6"/><polygon points="723.6,160.6 728.8,162.2 728.8,174.2 723.6,172.6" fill="#3a7fb0" stroke="#1e587c" stroke-width="0.6"/><path d="M712.4,166 l4.4,-3 M712.4,169.4 l4.4,-3 M712.4,172.8 l4.4,-3 M724,165 l4.4,-2.4 M724,168.4 l4.4,-2.4 M724,171.8 l4.4,-2.4" stroke="#bfe3f5" stroke-width="0.8"/></g>
<g><polygon points="737.4,168.4 749.6,157.6 752.6,160.6 741.8,173.8 738,173" fill="#b5b8ba" stroke="#6c7073" stroke-width="0.8"/><ellipse cx="739.8" cy="171" rx="2" ry="2.8" transform="rotate(-38 739.8 171)" fill="#e3e5e6" stroke="#6c7073" stroke-width="0.6"/><polygon points="742.6,155.6 749.2,155.8 745.4,159.6 748.4,159.8 740.6,166.4 742.6,161.4 738.6,161.2" fill="#f6b21a" stroke="#d4560e" stroke-width="0.7"/><path d="M745.6,174.2 L750.2,166.4 L754.8,174.2 M747.4,171.4 L753,171.4" fill="none" stroke="#3a7fb0" stroke-width="1.7"/></g>
<g><path d="M769.4,155.4 L781.6,155.4 L781.6,168 L775.2,173.8 M769.4,155.4 L763.2,161 M781.6,155.4 L775.2,161 M770,155.6 L770,161" fill="none" stroke="#8b8f92" stroke-width="1"/><rect x="763.2" y="161.2" width="11.8" height="12.6" fill="#3f83ad" stroke="#86b9d6" stroke-width="0.9"/></g>
<polygon points="788.6,164.0 794.2,164.0 791.4,167.2" fill="#8c8c8c"/>
<polygon points="828.6,164.0 834.2,164.0 831.4,167.2" fill="#8c8c8c"/>
<polygon points="868.4,164.0 874.0,164.0 871.2,167.2" fill="#8c8c8c"/>
<polygon points="934.4,164.0 940.0,164.0 937.2,167.2" fill="#8c8c8c"/>
<polygon points="974.6,164.0 980.2,164.0 977.4,167.2" fill="#8c8c8c"/>
<g stroke-linejoin="round"><polygon points="804.4,158.2 811.6,155.6 820.8,157.6 813.4,160.4" fill="#a9d6ee" stroke="#dfe9ee" stroke-width="0.6"/><polygon points="804.4,158.2 813.4,160.4 813.4,174.2 805,171" fill="#3b7fa8" stroke="#2a5e7e" stroke-width="0.6"/><polygon points="807,159.4 809.8,160 809.8,172.6 807.4,171.8" fill="#7db7d8"/><polygon points="813.4,160.4 820.8,157.6 820.8,170.6 813.4,174.2" fill="#e4e6e7" stroke="#9a9c9d" stroke-width="0.6"/></g>
<g><path d="M843.6,164.6 C847.6,157 857.6,157 861.6,164.6 C857.6,172 847.6,172 843.6,164.6 Z" fill="#8e8e8e" stroke="#a9a9a9" stroke-width="0.8"/><circle cx="852.6" cy="164.4" r="4.1" fill="#262626"/><circle cx="854" cy="162.6" r="1.3" fill="#8e8e8e"/><path d="M852.5,157.4 L852.5,172.2" stroke="#3a3a3a" stroke-width="0.9"/></g>
<g><circle cx="890.8" cy="162.6" r="7.5" fill="#2a8a2a"/><path d="M890.8,162.6 L883.4,164.1 A7.5,7.5 0 0 1 891.5,155.1 Z" fill="#2d62b8"/><path d="M890.8,162.6 L891.5,155.1 A7.5,7.5 0 0 1 898.1,164.5 Z" fill="#b4201c"/><path d="M890.8,162.6 L898.1,164.5 A7.5,7.5 0 0 1 893.0,169.8 Z" fill="#e0b42a"/><circle cx="888.5" cy="159.6" r="2.9" fill="#ffffff" opacity="0.35"/></g>
<g><polygon points="889,174.6 890.6,169.6 898.6,161.4 902,164.6 894,172.8" fill="#f0c02a" stroke="#5a4a1a" stroke-width="0.8"/><polygon points="898.6,161.4 900.2,159.8 903.6,163 902,164.6" fill="#d43a2a" stroke="#5a2a1a" stroke-width="0.6"/><polygon points="889,174.6 890.6,169.6 894,172.8" fill="#e8d8b0" stroke="#5a4a1a" stroke-width="0.6"/></g>
<g>
<rect x="908.6" y="165.4" width="3" height="3" fill="#f2f2f2"/>
<rect x="908.6" y="168.4" width="3" height="3" fill="#1c1c1c"/>
<rect x="908.6" y="171.4" width="3" height="3" fill="#f2f2f2"/>
<rect x="911.6" y="165.4" width="3" height="3" fill="#1c1c1c"/>
<rect x="911.6" y="168.4" width="3" height="3" fill="#f2f2f2"/>
<rect x="911.6" y="171.4" width="3" height="3" fill="#1c1c1c"/>
<rect x="914.6" y="165.4" width="3" height="3" fill="#f2f2f2"/>
<rect x="914.6" y="168.4" width="3" height="3" fill="#1c1c1c"/>
<rect x="914.6" y="171.4" width="3" height="3" fill="#f2f2f2"/>
<rect x="917.6" y="165.4" width="3" height="3" fill="#1c1c1c"/>
<rect x="917.6" y="168.4" width="3" height="3" fill="#f2f2f2"/>
<rect x="917.6" y="171.4" width="3" height="3" fill="#1c1c1c"/>
<rect x="920.6" y="165.4" width="3" height="3" fill="#f2f2f2"/>
<rect x="920.6" y="168.4" width="3" height="3" fill="#1c1c1c"/>
<rect x="920.6" y="171.4" width="3" height="3" fill="#f2f2f2"/>
<rect x="923.6" y="165.4" width="3" height="3" fill="#1c1c1c"/>
<rect x="923.6" y="168.4" width="3" height="3" fill="#f2f2f2"/>
<rect x="923.6" y="171.4" width="3" height="3" fill="#1c1c1c"/>
</g>
<g><circle cx="917.4" cy="162.4" r="7.5" fill="#2a8a2a"/><path d="M917.4,162.4 L910.0,163.9 A7.5,7.5 0 0 1 918.1,154.9 Z" fill="#2d62b8"/><path d="M917.4,162.4 L918.1,154.9 A7.5,7.5 0 0 1 924.7,164.3 Z" fill="#b4201c"/><path d="M917.4,162.4 L924.7,164.3 A7.5,7.5 0 0 1 919.6,169.6 Z" fill="#e0b42a"/><circle cx="915.1" cy="159.4" r="2.9" fill="#ffffff" opacity="0.35"/></g>
<g><rect x="949.8" y="157.8" width="16.4" height="10.6" fill="url(#gm)" stroke="#7e7e7e" stroke-width="0.6"/><path d="M958,168.6 L958,171.4 M954,173.2 C954,171 962,171 962,173.2 Z" fill="none" stroke="#bdbdbd" stroke-width="1"/></g>
<g><polygon points="1395.4,1061 1399.6,1069.4 1391.2,1069.4" fill="#ffe11a" stroke="#d9630c" stroke-width="0.9" stroke-linejoin="round"/><rect x="1395" y="1063.6" width="0.9" height="3" fill="#1a1a3a"/><rect x="1395" y="1067.3" width="0.9" height="0.9" fill="#1a1a3a"/><path d="M1391.2,1071.2 C1397,1072 1402,1069.6 1402.6,1064.4" fill="none" stroke="#111" stroke-width="1.5"/><polygon points="1399.2,1064.8 1402.6,1061 1406,1064.8" fill="#111"/><g fill="#1f5a84"><rect x="1391.1" y="1073.2" width="1.8" height="1.8"/><rect x="1394.2" y="1073.2" width="1.8" height="1.8"/><polygon points="1397.2,1075 1397.2,1073.4 1399.8,1072.2 1399.8,1075"/><rect x="1401.2" y="1069.8" width="2.8" height="5.2"/></g></g>
<g id="triad"><polygon points="60.3,968.3 50.6,956.9 55,951.9 61.6,960.6" fill="#175c17"/><path d="M47.4,949 L53.4,949.6 C56.2,950 57,952.4 56.6,955 L55.4,959 L49,958.6 L47.2,956 Z" fill="#186018"/><path d="M47.4,949 L49.8,951.2 L49.2,956.4 L47.2,956 Z" fill="#0c2e0c"/><polygon points="65,965.2 87.2,963.8 87.2,967.8 65,969" fill="#d42222"/><polygon points="65,967.4 87.2,966.4 87.2,967.8 65,969" fill="#9c1414"/><polygon points="84.2,961.2 95.8,964.9 86.4,971.6" fill="#8b1a1a"/><polygon points="84.2,961.2 86.2,960.6 88.4,971 86.4,971.6" fill="#6c1212"/><polygon points="60.3,968.6 62.2,947.6 67.8,947.6 65,968.6" fill="#1c1ccc"/><polygon points="60,945.4 67.2,936.6 71.1,947.4 60.6,946" fill="#2424d8"/><polygon points="65.8,939.6 67.2,936.6 68,947 65.4,946.6" fill="#8a8aff"/></g>
</svg>
<svg id="labels" style="left:0;top:0" width="1440" height="1080" viewBox="0 0 1440 1080" font-family="Liberation Sans, sans-serif"><text x="63.9" y="934.7" font-size="15" fill="#1414ff" textLength="6.2" lengthAdjust="spacingAndGlyphs">Z</text><text x="41.9" y="950" font-size="15" fill="#128a12" textLength="7.3" lengthAdjust="spacingAndGlyphs">Y</text><text x="96.9" y="968.8" font-size="15" fill="#ff1a1a" textLength="7.3" lengthAdjust="spacingAndGlyphs">X</text><text x="1155.6" y="24.4" font-size="12.5" font-weight="bold" fill="#1d5e8a">?</text></svg>
</div>
</body>
</html>
